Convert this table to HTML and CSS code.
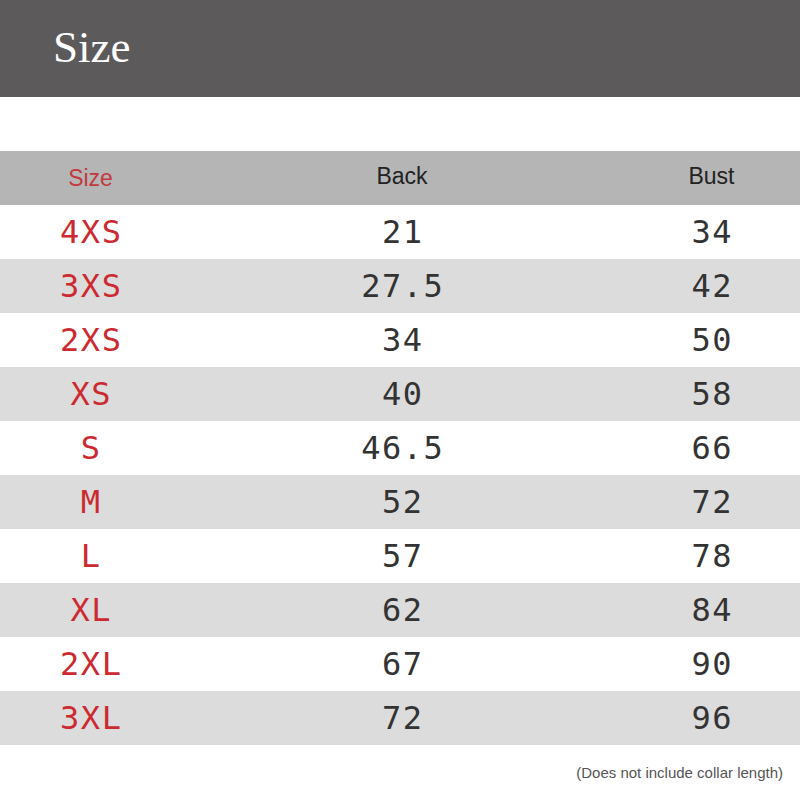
FILE: index.html
```html
<!DOCTYPE html>
<html>
<head>
<meta charset="utf-8">
<link rel="stylesheet" href="styles.css">
</head>
<body>
<div class="page">
  <header class="banner"><h1 class="banner-title">Size</h1></header>
  <div class="table">
    <div class="row head">
      <div class="cell c-size">Size</div>
      <div class="cell">Back</div>
      <div class="cell">Bust</div>
    </div>
    <div class="row"><div class="cell c-size">4XS</div><div class="cell">21</div><div class="cell">34</div></div>
    <div class="row alt"><div class="cell c-size">3XS</div><div class="cell">27.5</div><div class="cell">42</div></div>
    <div class="row"><div class="cell c-size">2XS</div><div class="cell">34</div><div class="cell">50</div></div>
    <div class="row alt"><div class="cell c-size">XS</div><div class="cell">40</div><div class="cell">58</div></div>
    <div class="row"><div class="cell c-size">S</div><div class="cell">46.5</div><div class="cell">66</div></div>
    <div class="row alt"><div class="cell c-size">M</div><div class="cell">52</div><div class="cell">72</div></div>
    <div class="row"><div class="cell c-size">L</div><div class="cell">57</div><div class="cell">78</div></div>
    <div class="row alt"><div class="cell c-size">XL</div><div class="cell">62</div><div class="cell">84</div></div>
    <div class="row"><div class="cell c-size">2XL</div><div class="cell">67</div><div class="cell">90</div></div>
    <div class="row alt"><div class="cell c-size">3XL</div><div class="cell">72</div><div class="cell">96</div></div>
  </div>
  <p class="note">(Does not include collar length)</p>
</div>
</body>
</html>
```
FILE: styles.css
```css
html, body {
  margin: 0;
  padding: 0;
  background: #ffffff;
}
.page {
  width: 800px;
  height: 800px;
  overflow: hidden;
  display: flex;
  flex-direction: column;
}
.banner {
  height: 97px;
  background: #5c5a5b;
  display: flex;
  align-items: center;
  padding-left: 53px;
  box-sizing: border-box;
}
.banner-title {
  margin: 0;
  font-family: "Liberation Serif", serif;
  font-weight: normal;
  font-size: 45px;
  color: #ffffff;
  line-height: 1;
  padding-bottom: 2px;
}
.table {
  margin-top: 54px;
  display: flex;
  flex-direction: column;
}
.row {
  height: 54px;
  display: grid;
  grid-template-columns: 181px 442px 177px;
  align-items: center;
  background: #ffffff;
}
.row.alt {
  background: #dcdcdc;
}
.cell {
  text-align: center;
  font-family: "DejaVu Sans Mono", monospace;
  font-size: 32px;
  letter-spacing: 1.5px;
  text-indent: 1.5px;
  color: #333333;
  line-height: 1;
}
.c-size {
  color: #cc2a30;
}
.row.head {
  background: #b5b5b5;
}
.row.head .cell {
  font-family: "Liberation Sans", Arial, sans-serif;
  font-size: 23px;
  letter-spacing: 0;
  text-indent: 0;
  color: #222222;
  padding-bottom: 3px;
}
.row.head .c-size {
  color: #c23a40;
  padding-bottom: 0;
  padding-top: 1px;
}
.note {
  margin: 0;
  flex: 1;
  display: flex;
  align-items: center;
  justify-content: flex-end;
  padding-right: 17px;
  font-family: "Liberation Sans", Arial, sans-serif;
  font-size: 15px;
  color: #555555;
}
```
